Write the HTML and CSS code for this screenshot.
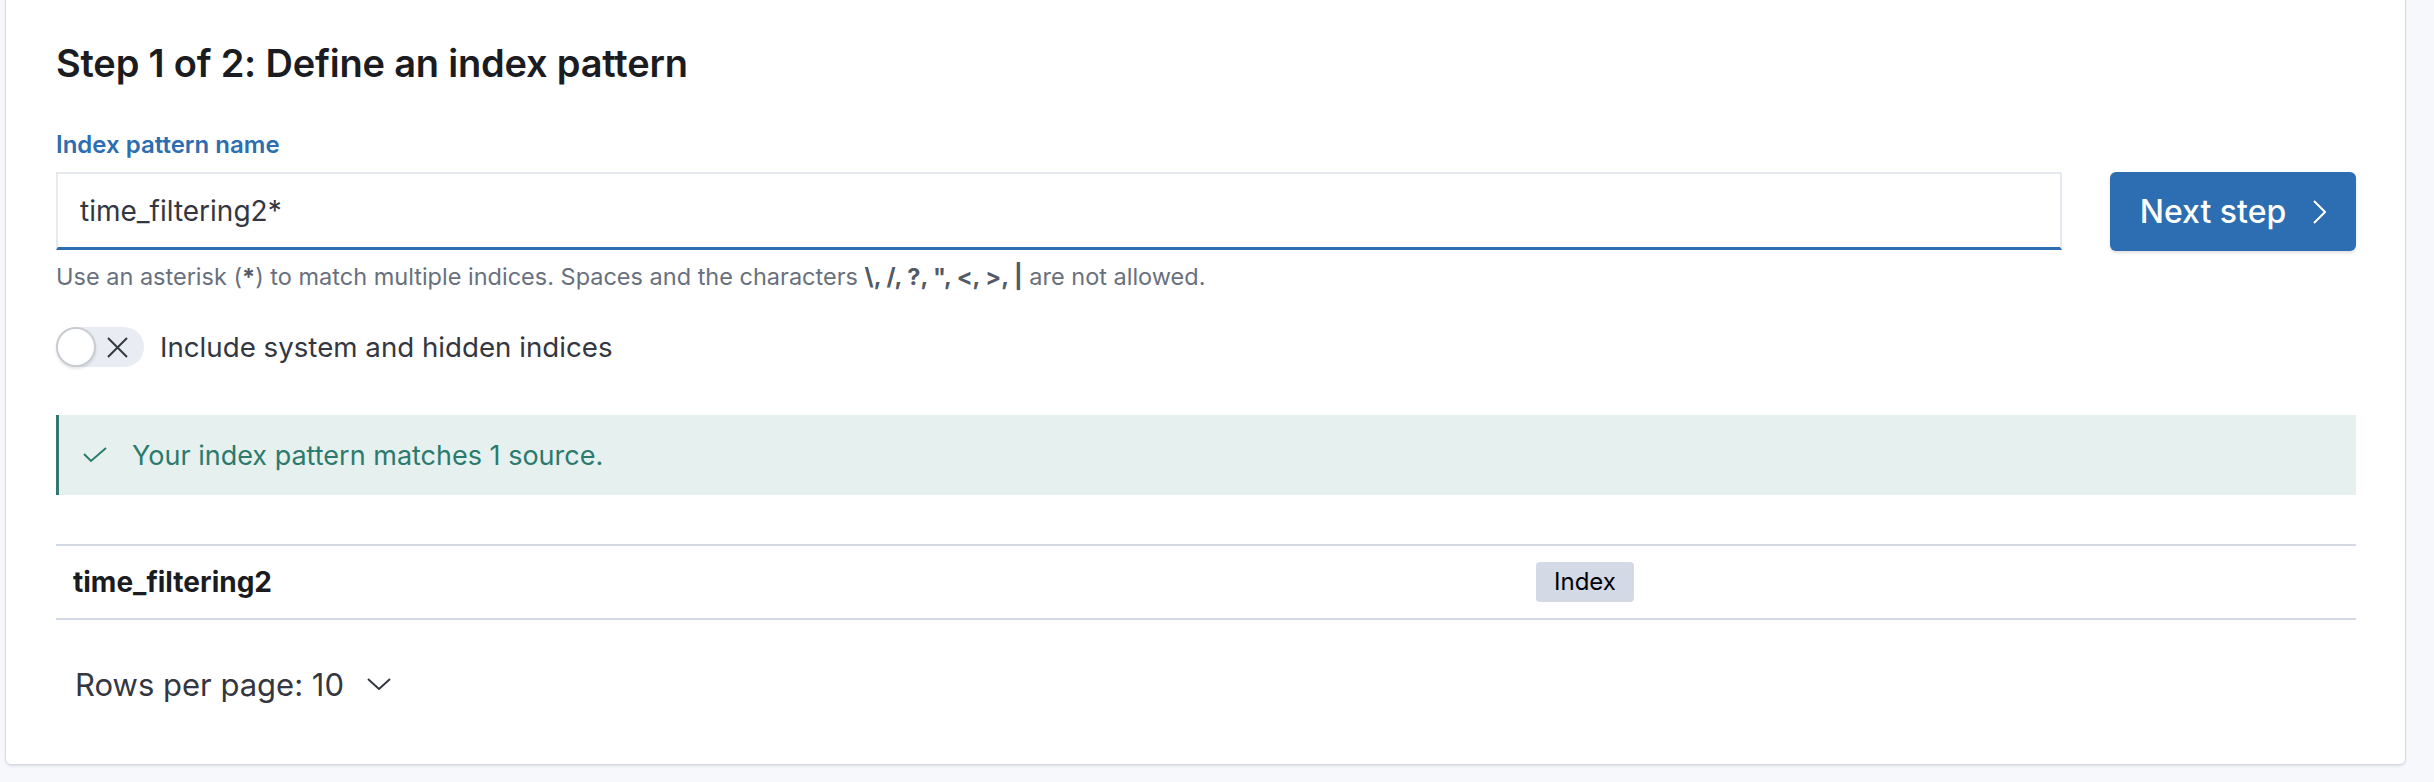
FILE: index.html
```html
<!DOCTYPE html>
<html lang="en">
<head>
    <meta charset="UTF-8">
    <meta name="viewport" content="width=device-width, initial-scale=1.0">
    <title>Create index pattern</title>
    <link rel="stylesheet" href="styles.css">
</head>
<body>
    <div class="panel">
        <h2 class="step-title">Step 1 of 2: Define an index pattern</h2>

        <div class="form-row">
            <label class="field-label" for="pattern">Index pattern name</label>
            <input class="field-input" id="pattern" type="text" value="time_filtering2*">
            <button class="next-btn">
                <span>Next step</span>
                <svg width="13" height="24" viewBox="0 0 13 24"><polyline points="1,1 12,12 1,23" fill="none" stroke="#fff" stroke-width="2"/></svg>
            </button>
            <div class="help-text">Use an asterisk (<strong>*</strong>) to match multiple indices. Spaces and the characters <strong>\, /, ?, &quot;, &lt;, &gt;, |</strong> are not allowed.</div>
        </div>

        <div class="switch-row">
            <div class="switch">
                <span class="switch-knob"></span>
                <svg class="switch-icon" width="21" height="21" viewBox="0 0 21 21"><path d="M1 1 L20 20 M20 1 L1 20" stroke="#343741" stroke-width="2"/></svg>
            </div>
            <span class="switch-label">Include system and hidden indices</span>
        </div>

        <div class="callout">
            <svg width="24" height="16" viewBox="0 0 24 16"><polyline points="1,7 8,14 23,1" fill="none" stroke="#2b7a6d" stroke-width="2"/></svg>
            <span>Your index pattern matches 1 source.</span>
        </div>

        <table class="sources">
            <tr>
                <td class="source-name">time_filtering2</td>
                <td><span class="badge">Index</span></td>
            </tr>
        </table>

        <div class="pagination">
            <span>Rows per page: 10</span>
            <svg width="24" height="12" viewBox="0 0 24 12"><polyline points="1,1 12,11 23,1" fill="none" stroke="#343741" stroke-width="2"/></svg>
        </div>
    </div>
</body>
</html>
```

FILE: styles.css
```css
:root {
    --primary-color: #2d6db1;
    --text-color: #343741;
    --subdued-color: #69707d;
    --border-color: #d3dae6;
    --success-color: #2b7a6d;
    --success-bg: #e6f1ef;
    --page-bg: #f7f8fc;
}

* {
    box-sizing: border-box;
    margin: 0;
    padding: 0;
}

body {
    font-family: Inter, "Noto Sans", sans-serif;
    background-color: var(--page-bg);
    color: var(--text-color);
    width: 2434px;
    height: 782px;
    overflow: hidden;
}

.panel {
    width: 2401px;
    margin: -10px 0 0 5px;
    padding: 48px 49px 60px 50px;
    background-color: #fff;
    border: 1px solid var(--border-color);
    border-radius: 6px;
    box-shadow: 0 2px 3px -1px rgba(152, 162, 179, 0.35);
}

.step-title {
    font-size: 38px;
    line-height: 48px;
    font-weight: 600;
    color: #1a1c21;
    letter-spacing: -0.2px;
}

.form-row {
    display: grid;
    grid-template-columns: 1fr 246px;
    column-gap: 48px;
    margin-top: 42px;
}

.field-label {
    grid-column: 1;
    font-size: 24px;
    line-height: 32px;
    font-weight: 600;
    color: var(--primary-color);
    margin-bottom: 11px;
}

.field-input {
    grid-column: 1;
    grid-row: 2;
    height: 78px;
    padding: 0 22px;
    font-family: inherit;
    font-size: 28px;
    color: var(--text-color);
    background-color: #fff;
    border: 2px solid #e6e9f0;
    border-bottom: 3px solid var(--primary-color);
    outline: none;
}

.next-btn {
    grid-column: 2;
    grid-row: 2;
    display: flex;
    align-items: center;
    justify-content: center;
    gap: 27px;
    height: 79px;
    font-family: inherit;
    font-size: 32px;
    font-weight: 500;
    color: #fff;
    background-color: var(--primary-color);
    border: none;
    border-radius: 6px;
    box-shadow: 0 2px 3px rgba(0, 0, 0, 0.12);
}

.help-text {
    grid-column: 1;
    grid-row: 3;
    margin-top: 10px;
    font-size: 23.5px;
    line-height: 32px;
    color: var(--subdued-color);
}

.help-text strong {
    color: #535966;
    font-weight: 700;
}

.switch-row {
    display: flex;
    align-items: center;
    gap: 16px;
    margin-top: 34px;
}

.switch {
    position: relative;
    width: 88px;
    height: 40px;
    border-radius: 20px;
    background-color: #e9edf3;
}

.switch-knob {
    position: absolute;
    left: 0;
    top: 0;
    width: 40px;
    height: 40px;
    border-radius: 50%;
    background-color: #fff;
    border: 2px solid #c9ccd1;
    box-shadow: 0 2px 3px rgba(0, 0, 0, 0.1);
}

.switch-icon {
    position: absolute;
    left: 51px;
    top: 10px;
}

.switch-label {
    font-size: 27.7px;
    line-height: 40px;
}

.callout {
    display: flex;
    align-items: center;
    gap: 25px;
    height: 80px;
    margin-top: 48px;
    padding-left: 24px;
    background-color: var(--success-bg);
    border-left: 3px solid #33786e;
    font-size: 27px;
    color: var(--success-color);
}

.sources {
    width: 100%;
    margin-top: 49px;
    border-collapse: collapse;
    border-top: 2px solid var(--border-color);
    border-bottom: 2px solid var(--border-color);
}

.sources td {
    height: 74px;
    padding: 0 17px;
    vertical-align: middle;
}

.source-name {
    width: 1463px;
    font-size: 28px;
    font-weight: 700;
    color: #1a1c21;
}

.badge {
    display: inline-block;
    height: 40px;
    padding: 0 18px;
    line-height: 40px;
    font-size: 24px;
    color: #000;
    background-color: var(--border-color);
    border-radius: 4px;
}

.pagination {
    display: flex;
    align-items: center;
    gap: 23px;
    height: 40px;
    margin-top: 44px;
    padding-left: 19px;
    font-size: 31px;
}
```
